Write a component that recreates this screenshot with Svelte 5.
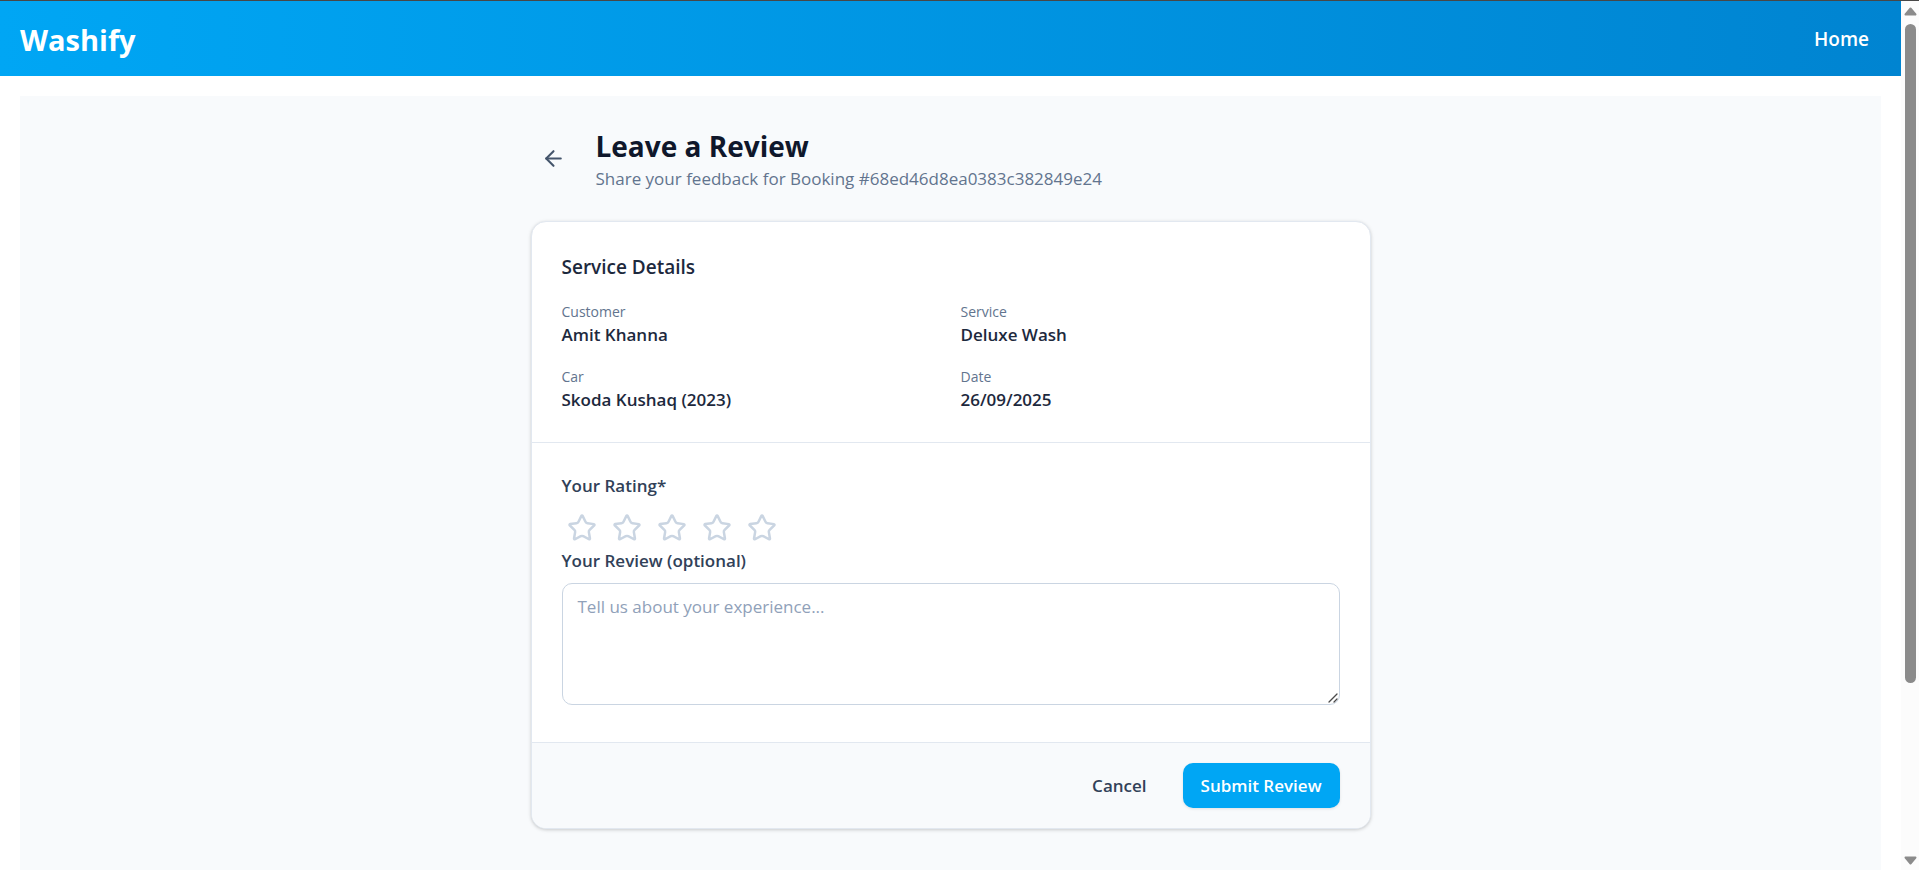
<script>
  const details = [
    { label: 'Customer', value: 'Amit Khanna' },
    { label: 'Service', value: 'Deluxe Wash' },
    { label: 'Car', value: 'Skoda Kushaq (2023)' },
    { label: 'Date', value: '26/09/2025' }
  ];
  const stars = [1, 2, 3, 4, 5];
  let rating = $state(0);
  let review = $state('');
</script>

<div class="window">
  <div class="page">
    <header class="navbar">
      <a class="brand" href="#top">Washify</a>
      <nav><a class="nav-link" href="#home">Home</a></nav>
    </header>

    <main class="content">
      <div class="column">
        <div class="heading">
          <button class="back" type="button" aria-label="Go back">
            <svg viewBox="0 0 24 24" aria-hidden="true">
              <path d="m12 19-7-7 7-7" />
              <path d="M19 12H5" />
            </svg>
          </button>
          <div>
            <h1>Leave a Review</h1>
            <p class="subtitle">Share your feedback for Booking #68ed46d8ea0383c382849e24</p>
          </div>
        </div>

        <form class="card" onsubmit={(e) => e.preventDefault()}>
          <section class="section details">
            <h2>Service Details</h2>
            <dl>
              {#each details as item}
                <div>
                  <dt>{item.label}</dt>
                  <dd>{item.value}</dd>
                </div>
              {/each}
            </dl>
          </section>

          <section class="section">
            <div class="label" id="rating-label">Your Rating*</div>
            <div class="stars" role="group" aria-labelledby="rating-label">
              {#each stars as n}
                <button
                  class="star"
                  class:filled={n <= rating}
                  type="button"
                  aria-label={`${n} of 5`}
                  onclick={() => (rating = n)}
                >
                  <svg viewBox="0 0 24 24" aria-hidden="true">
                    <path d="M11.525 2.295a.53.53 0 0 1 .95 0l2.31 4.679a2.123 2.123 0 0 0 1.595 1.16l5.166.756a.53.53 0 0 1 .294.904l-3.736 3.638a2.123 2.123 0 0 0-.611 1.878l.882 5.14a.53.53 0 0 1-.771.56l-4.618-2.428a2.122 2.122 0 0 0-1.973 0L6.396 21.01a.53.53 0 0 1-.77-.56l.881-5.139a2.122 2.122 0 0 0-.611-1.879L2.16 9.795a.53.53 0 0 1 .294-.906l5.165-.755a2.122 2.122 0 0 0 1.597-1.16z" />
                  </svg>
                </button>
              {/each}
            </div>
            <label class="label" for="review">Your Review (optional)</label>
            <div class="field">
              <textarea id="review" rows="4" placeholder="Tell us about your experience..." bind:value={review}></textarea>
              <svg class="grip" viewBox="0 0 10 10" aria-hidden="true">
                <path d="M1 9 9 1M6 9 9 6" />
              </svg>
            </div>
          </section>

          <footer class="actions">
            <button class="btn" type="button">Cancel</button>
            <button class="btn primary" type="submit">Submit Review</button>
          </footer>
        </form>
      </div>
    </main>
  </div>

  <div class="scrollbar" aria-hidden="true">
    <svg viewBox="0 0 13 9"><path d="M6.500 1.500 11.500 7.500H1.500z" /></svg>
    <div class="track"><div class="thumb"></div></div>
    <svg viewBox="0 0 13 9"><path d="M6.500 7.500 11.500 1.500H1.500z" /></svg>
  </div>
</div>

<style>
  :global(body) {
    margin: 0;
    overflow: hidden;
    background: #fff;
  }
  .window {
    box-sizing: border-box;
    display: flex;
    height: 100vh;
    border-top: 1px solid #474747;
    overflow: hidden;
    font-family: 'Open Sans', 'Noto Sans', sans-serif;
    font-size: 17px;
    line-height: 25px;
    color: #1d293d;
  }
  .window :is(h1, h2, p, dl, dd) {
    margin: 0;
  }
  .page {
    flex: 1;
    min-width: 0;
    display: flex;
    flex-direction: column;
    gap: 20px;
  }
  .navbar {
    display: flex;
    align-items: center;
    justify-content: space-between;
    padding: 16px 32px 14px 20px;
    background: linear-gradient(90deg, #00a6f4, #0084d1);
  }
  .navbar a {
    color: #fff;
    text-decoration: none;
  }
  .brand {
    font-size: 29px;
    line-height: 45px;
    font-weight: 700;
  }
  .nav-link {
    font-size: 19px;
    font-weight: 600;
  }
  .content {
    flex: 1;
    margin: 0 20px;
    padding: 30px;
    background: #f8fafc;
  }
  .column {
    max-width: 840px;
    margin: 0 auto;
  }
  .heading {
    display: flex;
    align-items: center;
    gap: 20px;
    margin-bottom: 30px;
  }
  button {
    border: 0;
    background: none;
    font: inherit;
    color: inherit;
    cursor: pointer;
  }
  svg {
    display: block;
    fill: none;
    stroke: currentColor;
    stroke-width: 2;
    stroke-linecap: round;
    stroke-linejoin: round;
  }
  .back {
    padding: 10px;
    color: #45556c;
  }
  .back svg {
    width: 25px;
    height: 25px;
  }
  h1 {
    font-size: 28px;
    line-height: 40px;
    font-weight: 700;
    color: #0f172b;
  }
  .subtitle {
    color: #62748e;
  }
  .card {
    border: 1px solid #e2e8f0;
    border-radius: 15px;
    background: #fff;
    box-shadow: 0 1px 4px rgba(0, 0, 0, 0.1), 0 1px 3px rgba(0, 0, 0, 0.1);
    overflow: hidden;
  }
  .section {
    padding: 30px;
  }
  .details {
    border-bottom: 1px solid #e2e8f0;
  }
  h2 {
    font-size: 19px;
    line-height: 30px;
    font-weight: 600;
  }
  dl {
    display: grid;
    grid-template-columns: 1fr 1fr;
    gap: 20px;
    padding-top: 20px;
  }
  dt {
    font-size: 14px;
    line-height: 20px;
    color: #62748e;
  }
  dd {
    font-weight: 600;
  }
  .label {
    display: block;
    margin-bottom: 10px;
    font-weight: 600;
    color: #314158;
  }
  .stars {
    display: flex;
    gap: 5px;
  }
  .star {
    padding: 5px;
    color: #cad5e2;
  }
  .star svg {
    width: 30px;
    height: 30px;
  }
  .star.filled {
    color: #ffb900;
  }
  .star.filled svg {
    fill: currentColor;
  }
  .field {
    position: relative;
    margin-bottom: 7px;
  }
  textarea {
    display: block;
    box-sizing: border-box;
    width: 100%;
    padding: 10px 15px;
    border: 1px solid #cad5e2;
    border-radius: 10px;
    background: #fff;
    font: inherit;
    color: inherit;
    resize: none;
  }
  textarea::placeholder {
    color: #90a1b9;
  }
  .grip {
    position: absolute;
    right: 2px;
    bottom: 2px;
    width: 10px;
    height: 10px;
    stroke: #4a4a4a;
    stroke-width: 1.3;
  }
  .actions {
    display: flex;
    justify-content: flex-end;
    gap: 18px;
    padding: 20px 30px;
    border-top: 1px solid #e2e8f0;
    background: #f8fafc;
  }
  .btn {
    padding: 10px 18px;
    border-radius: 10px;
    font-weight: 600;
    color: #314158;
  }
  .primary {
    background: #00a6f4;
    color: #fff;
    box-shadow: 0 1px 3px rgba(0, 0, 0, 0.1);
  }
  .scrollbar {
    box-sizing: border-box;
    width: 18px;
    flex: none;
    display: flex;
    flex-direction: column;
    align-items: center;
    gap: 8px;
    padding: 6px 0 5px 1px;
    background: #fcfcfc;
  }
  .scrollbar svg {
    width: 13px;
    height: 9px;
    fill: #8b8b8b;
    stroke: #8b8b8b;
  }
  .track {
    flex: 1;
    width: 11px;
  }
  .thumb {
    height: 80%;
    border-radius: 6px;
    background: #8b8b8b;
  }
</style>
